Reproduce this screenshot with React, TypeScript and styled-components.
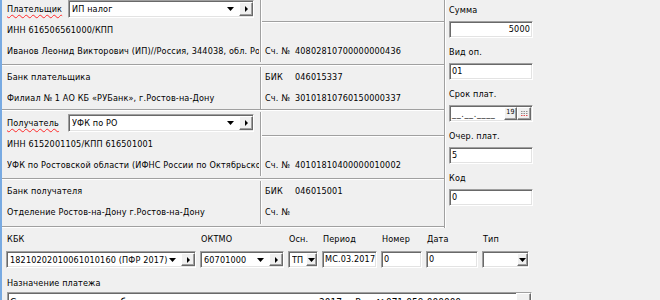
import React from "react";
import styled, { createGlobalStyle, css } from "styled-components";

const GlobalStyle = createGlobalStyle`
  html, body {
    margin: 0;
    padding: 0;
    background: #f0f0f0;
  }
  body {
    font-family: "DejaVu Sans Condensed", "DejaVu Sans", sans-serif;
    font-size: 9px;
    letter-spacing: 0.15px;
    color: #000;
    overflow: hidden;
  }
`;

const sunken = css`
  box-sizing: border-box;
  background: #fff;
  border: 1px solid;
  border-color: #a0a0a0 #fff #fff #a0a0a0;
  box-shadow: inset 1px 1px #696969, inset -1px -1px #e3e3e3;
`;

const raised = css`
  box-sizing: border-box;
  background: #f0f0f0;
  border: 1px solid;
  border-color: #fff #696969 #696969 #fff;
  box-shadow: inset -1px -1px #a0a0a0;
`;

const Window = styled.div`
  width: 660px;
  height: 300px;
  overflow: hidden;
  box-sizing: border-box;
  border-left: 2px solid #78aae2;
  background: #f0f0f0;
  display: flex;
  flex-direction: column;
`;

const Top = styled.div`
  display: flex;
  height: 228px;
  flex: none;
`;

const LeftPanel = styled.div`
  width: 442px;
  margin-top: -3px;
  display: flex;
  flex-direction: column;
`;

const Section = styled.div<{ $h: number }>`
  height: ${(p) => p.$h}px;
  display: grid;
  grid-template-columns: 258px 184px;
  flex: none;
`;

const LeftCol = styled.div<{ $pt: number }>`
  box-sizing: border-box;
  width: 258px;
  min-width: 0;
  padding: ${(p) => p.$pt}px 1px 0 5px;
  display: flex;
  flex-direction: column;
  overflow: hidden;
`;

const MidCol = styled.div`
  margin: 1px 0 2px;
  border-left: 1px solid #a0a0a0;
  box-shadow: inset 1px 0 #fff;
  display: flex;
  flex-direction: column;
  min-width: 0;
`;

const TopBlank = styled.div`
  height: 23px;
  flex: none;
  margin-left: 1px;
  border-bottom: 1px solid #a0a0a0;
  box-shadow: 0 1px #fff;
`;

const Row = styled.div<{ $push?: boolean }>`
  height: 21px;
  line-height: 21px;
  white-space: nowrap;
  overflow: hidden;
  flex: none;
  ${(p) => p.$push && "margin-top: auto;"}
`;

const MidRow = styled(Row)`
  padding-left: 4px;
  display: flex;
`;

const MidKey = styled.span`
  width: 30px;
  flex: none;
`;

const Separator = styled.div`
  height: 0;
  flex: none;
  border-top: 1px solid #a0a0a0;
  border-bottom: 1px solid #fff;
`;

const ComboRow = styled.div`
  height: 18px;
  display: flex;
  align-items: center;
  margin-bottom: 2px;
  flex: none;
`;

const PartyLabel = styled.span`
  width: 61px;
  flex: none;
  text-decoration: underline wavy #ff2a2a;
  text-decoration-thickness: 1px;
  text-underline-offset: 2px;
  text-decoration-skip-ink: none;
`;

const Combo = styled.div<{ $w: number; $h?: number }>`
  ${sunken};
  width: ${(p) => p.$w}px;
  height: ${(p) => p.$h ?? 18}px;
  display: flex;
  align-items: stretch;
  padding: 1px 0 1px 3px;
  flex: none;
`;

const ComboText = styled.span`
  flex: 1;
  overflow: hidden;
  white-space: nowrap;
  display: flex;
  align-items: center;
`;

const ArrowSlot = styled.span`
  width: 7px;
  display: flex;
  align-items: center;
  margin-right: 5px;
`;

const LookupButton = styled.span`
  ${raised};
  width: 14px;
  display: flex;
  align-items: center;
  justify-content: center;
`;

const DropButton = styled.span`
  ${raised};
  width: 11px;
  display: flex;
  align-items: center;
  justify-content: center;
`;

const Divider = styled.div`
  width: 0;
  border-left: 1px solid #a0a0a0;
  border-right: 1px solid #fff;
  flex: none;
`;

const RightCol = styled.div`
  padding-left: 3px;
  display: flex;
  flex-direction: column;
`;

const Field = styled.div`
  display: flex;
  flex-direction: column;
  margin-bottom: 4px;
`;

const FieldLabel = styled.div`
  height: 20px;
  line-height: 20px;
  white-space: nowrap;
`;

const TextBox = styled.div<{ $w?: number; $right?: boolean; $flush?: boolean }>`
  ${sunken};
  width: ${(p) => p.$w ?? 84}px;
  height: 17px;
  margin-top: ${(p) => (p.$flush ? 0 : 1)}px;
  padding: 0 2px;
  line-height: 15px;
  white-space: nowrap;
  overflow: hidden;
  text-align: ${(p) => (p.$right ? "right" : "left")};
`;

const DateBox = styled.div`
  ${sunken};
  width: 84px;
  height: 17px;
  margin-top: 1px;
  padding: 1px 1px 1px 2px;
  display: flex;
`;

const DateMask = styled.span`
  flex: 1;
  line-height: 15px;
  letter-spacing: 0.6px;
  color: #222;
`;

const CenturyButton = styled.span`
  ${raised};
  width: 13px;
  font-size: 7px;
  line-height: 8px;
  text-align: center;
`;

const CalendarButton = styled.span`
  ${raised};
  width: 14px;
  display: flex;
  align-items: center;
  justify-content: center;
`;

const Bottom = styled.div`
  padding: 1px 0 0 4px;
  display: flex;
  flex-direction: column;
`;

const DetailsGrid = styled.div`
  display: grid;
  grid-template-columns: 190px 84px 30px 55px 41px 52px 47px;
  grid-template-rows: 21px 17px;
  column-gap: 4px;
  row-gap: 1px;
`;

const DetailLabel = styled.div`
  line-height: 21px;
  padding-left: 1px;
  white-space: nowrap;
`;

const PurposeLabel = styled.div`
  margin-top: 6px;
  height: 18px;
  line-height: 18px;
  padding-left: 1px;
`;

const Memo = styled.div`
  ${sunken};
  width: 525px;
  height: 30px;
  margin-left: 1px;
  display: flex;
  flex: none;
`;

const MemoText = styled.div`
  flex: 1;
  padding: 4px 2px 0;
  white-space: nowrap;
  overflow: hidden;
  font-size: 10px;
  letter-spacing: 0;
  line-height: 12px;
`;

const ScrollTrack = styled.div`
  width: 15px;
  background: #e8e8e8;
  display: flex;
  flex-direction: column;
`;

const ScrollButton = styled.div`
  ${raised};
  height: 15px;
`;

function TriDown() {
  return (
    <svg width="7" height="4" viewBox="0 0 7 4">
      <polygon points="0,0 7,0 3.5,4" fill="#000" />
    </svg>
  );
}

function TriRight() {
  return (
    <svg width="3" height="6" viewBox="0 0 3 6">
      <polygon points="0,0 3,3 0,6" fill="#000" />
    </svg>
  );
}

function CalendarIcon() {
  const cells = [];
  for (let r = 0; r < 3; r++) {
    for (let c = 0; c < 3; c++) {
      cells.push(
        <rect key={`${r}-${c}`} x={c * 2.5} y={r * 2} width="1.5" height="1" fill={r === 2 ? "#e05050" : "#909090"} />
      );
    }
  }
  return (
    <svg width="7" height="6" viewBox="0 0 7 6">
      {cells}
    </svg>
  );
}

interface LookupProps {
  width: number;
  height?: number;
  value: string;
}

function Lookup({ width, height, value }: LookupProps) {
  return (
    <Combo $w={width} $h={height}>
      <ComboText>{value}</ComboText>
      <ArrowSlot>
        <TriDown />
      </ArrowSlot>
      <LookupButton>
        <TriRight />
      </LookupButton>
    </Combo>
  );
}

function Select({ width, value }: { width: number; value: string }) {
  return (
    <Combo $w={width} $h={17}>
      <ComboText>{value}</ComboText>
      <DropButton>
        <TriDown />
      </DropButton>
    </Combo>
  );
}

interface PartyProps {
  label: string;
  value: string;
  inn: string;
  name: string;
  account: string;
}

function PartySection({ label, value, inn, name, account }: PartyProps) {
  return (
    <Section $h={67}>
      <LeftCol $pt={3}>
        <ComboRow>
          <PartyLabel>{label}</PartyLabel>
          <Lookup width={186} value={value} />
        </ComboRow>
        <Row>{inn}</Row>
        <Row>{name}</Row>
      </LeftCol>
      <MidCol>
        <TopBlank />
        <MidRow $push>
          <MidKey>Сч. №</MidKey>
          {account}
        </MidRow>
      </MidCol>
    </Section>
  );
}

interface BankProps {
  height: number;
  title: string;
  name: string;
  bik: string;
  account: string;
}

function BankSection({ height, title, name, bik, account }: BankProps) {
  return (
    <Section $h={height}>
      <LeftCol $pt={1}>
        <Row>{title}</Row>
        <Row>{name}</Row>
      </LeftCol>
      <MidCol>
        <MidRow>
          <MidKey>БИК</MidKey>
          {bik}
        </MidRow>
        <MidRow>
          <MidKey>Сч. №</MidKey>
          {account}
        </MidRow>
      </MidCol>
    </Section>
  );
}

export default function App() {
  return (
    <>
      <GlobalStyle />
      <Window>
        <Top>
          <LeftPanel>
            <PartySection
              label="Плательщик"
              value="ИП налог"
              inn="ИНН 616506561000/КПП"
              name="Иванов Леонид Викторович (ИП)//Россия, 344038, обл. Ростовская"
              account="40802810700000000436"
            />
            <Separator />
            <BankSection
              height={43}
              title="Банк плательщика"
              name="Филиал № 1 АО КБ «РУБанк», г.Ростов-на-Дону"
              bik="046015337"
              account="30101810760150000337"
            />
            <Separator />
            <PartySection
              label="Получатель"
              value="УФК по РО"
              inn="ИНН 6152001105/КПП 616501001"
              name="УФК по Ростовской области (ИФНС России по Октябрьскому району)"
              account="40101810400000010002"
            />
            <Separator />
            <BankSection
              height={46}
              title="Банк получателя"
              name="Отделение Ростов-на-Дону г.Ростов-на-Дону"
              bik="046015001"
              account=""
            />
            <Separator />
          </LeftPanel>
          <Divider />
          <RightCol>
            <Field>
              <FieldLabel>Сумма</FieldLabel>
              <TextBox $right>5000</TextBox>
            </Field>
            <Field>
              <FieldLabel>Вид оп.</FieldLabel>
              <TextBox>01</TextBox>
            </Field>
            <Field>
              <FieldLabel>Срок плат.</FieldLabel>
              <DateBox>
                <DateMask>__.__.____</DateMask>
                <CenturyButton>19</CenturyButton>
                <CalendarButton>
                  <CalendarIcon />
                </CalendarButton>
              </DateBox>
            </Field>
            <Field>
              <FieldLabel>Очер. плат.</FieldLabel>
              <TextBox>5</TextBox>
            </Field>
            <Field>
              <FieldLabel>Код</FieldLabel>
              <TextBox>0</TextBox>
            </Field>
          </RightCol>
        </Top>
        <Bottom>
          <DetailsGrid>
            <DetailLabel>КБК</DetailLabel>
            <DetailLabel>ОКТМО</DetailLabel>
            <DetailLabel>Осн.</DetailLabel>
            <DetailLabel>Период</DetailLabel>
            <DetailLabel>Номер</DetailLabel>
            <DetailLabel>Дата</DetailLabel>
            <DetailLabel>Тип</DetailLabel>
            <Lookup width={190} height={17} value="18210202010061010160 (ПФР 2017)" />
            <Lookup width={84} height={17} value="60701000" />
            <Select width={30} value="ТП" />
            <TextBox $w={55} $flush>МС.03.2017</TextBox>
            <TextBox $w={41} $flush>0</TextBox>
            <TextBox $w={52} $flush>0</TextBox>
            <Select width={47} value="" />
          </DetailsGrid>
          <PurposeLabel>Назначение платежа</PurposeLabel>
          <Memo>
            <MemoText>
              Страховые взносы на обязательное пенсионное страхование за 2017 г. Рег. №071-059-000000
            </MemoText>
            <ScrollTrack>
              <ScrollButton />
            </ScrollTrack>
          </Memo>
        </Bottom>
      </Window>
    </>
  );
}
